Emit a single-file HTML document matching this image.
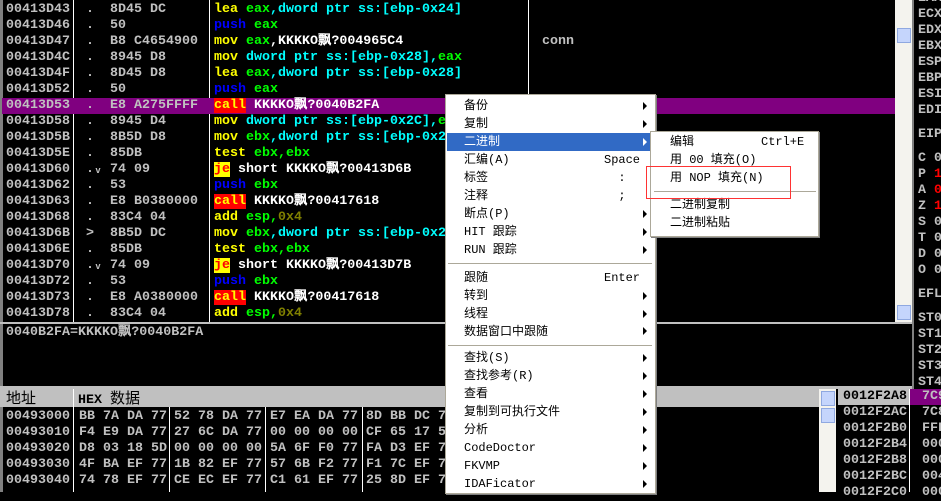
<!DOCTYPE html><html><head><meta charset="utf-8"><style>
*{margin:0;padding:0;box-sizing:border-box}
body{width:941px;height:492px;overflow:hidden;background:#000;position:relative;font-family:"Liberation Mono",monospace;font-weight:bold;font-size:13.33px;color:#c0c0c0}
.a{position:absolute;white-space:pre;line-height:16px}
.y{color:#ff0}.g{color:#0f0}.c{color:#0ff}.b{color:#00f}.o{color:#808000}.w{color:#fff}
.cl{background:#f00;color:#ff0}.je{background:#ff0;color:#f00}
.m{position:absolute;font-family:"Liberation Mono","Noto Sans CJK SC",monospace;font-weight:normal;font-size:12px;color:#000;line-height:18px;white-space:pre}
.arr{position:absolute;width:0;height:0;border-top:4px solid transparent;border-bottom:4px solid transparent;border-left:4px solid #000}
.sep{position:absolute;height:1px;background:#aca899}
</style></head><body>
<div style="position:absolute;left:0;top:0;width:3px;height:492px;background:#808080"></div>
<div style="position:absolute;left:73px;top:0;width:1px;height:322px;background:#fff"></div>
<div style="position:absolute;left:209px;top:0;width:1px;height:322px;background:#fff"></div>
<div style="position:absolute;left:528px;top:0;width:1px;height:322px;background:#fff"></div>
<div style="position:absolute;left:2px;top:98px;width:893px;height:16px;background:#800080"></div>
<div class="a" style="left:6px;top:2px">00413D43
00413D46
00413D47
00413D4C
00413D4F
00413D52
00413D53
00413D58
00413D5B
00413D5E
00413D60
00413D62
00413D63
00413D68
00413D6B
00413D6E
00413D70
00413D72
00413D73
00413D78</div>
<div class="a" style="left:86px;top:2px">.  8D45 DC
.  50
.  B8 C4654900
.  8945 D8
.  8D45 D8
.  50
.  E8 A275FFFF
.  8945 D4
.  8B5D D8
.  85DB
.ᵥ 74 09
.  53
.  E8 B0380000
.  83C4 04
&gt;  8B5D DC
.  85DB
.ᵥ 74 09
.  53
.  E8 A0380000
.  83C4 04</div>
<div class="a" style="left:214px;top:2px"><span class="y">lea</span> <span class="g">eax</span><span class="c">,dword ptr ss:[ebp-0x24]</span>
<span class="b">push</span> <span class="g">eax</span>
<span class="y">mov</span> <span class="g">eax</span><span class="w">,KKKKO飘?004965C4</span>
<span class="y">mov</span> <span class="c">dword ptr ss:[ebp-0x28],</span><span class="g">eax</span>
<span class="y">lea</span> <span class="g">eax</span><span class="c">,dword ptr ss:[ebp-0x28]</span>
<span class="b">push</span> <span class="g">eax</span>
<span class="cl">call</span> <span class="w">KKKKO飘?0040B2FA</span>
<span class="y">mov</span> <span class="c">dword ptr ss:[ebp-0x2C],</span><span class="g">eax</span>
<span class="y">mov</span> <span class="g">ebx</span><span class="c">,dword ptr ss:[ebp-0x28]</span>
<span class="y">test</span> <span class="g">ebx,ebx</span>
<span class="je">je</span><span class="w"> short KKKKO飘?00413D6B</span>
<span class="b">push</span> <span class="g">ebx</span>
<span class="cl">call</span> <span class="w">KKKKO飘?00417618</span>
<span class="y">add</span> <span class="g">esp</span><span class="g">,</span><span class="o">0x4</span>
<span class="y">mov</span> <span class="g">ebx</span><span class="c">,dword ptr ss:[ebp-0x24]</span>
<span class="y">test</span> <span class="g">ebx,ebx</span>
<span class="je">je</span><span class="w"> short KKKKO飘?00413D7B</span>
<span class="b">push</span> <span class="g">ebx</span>
<span class="cl">call</span> <span class="w">KKKKO飘?00417618</span>
<span class="y">add</span> <span class="g">esp</span><span class="g">,</span><span class="o">0x4</span></div>
<div class="a" style="left:542px;top:34px">conn</div>
<div style="position:absolute;left:895px;top:0;width:17px;height:322px;background:#f4f3ee"></div>
<div style="position:absolute;left:897px;top:28px;width:14px;height:15px;background:#c5d5fc;border:1px solid #8fa8e0"></div>
<div style="position:absolute;left:897px;top:305px;width:14px;height:15px;background:#c5d5fc;border:1px solid #8fa8e0"></div>
<div style="position:absolute;left:912px;top:0;width:2px;height:390px;background:#808080"></div>
<div class="a" style="left:918px;top:-9px">EAX
ECX
EDX
EBX
ESP
EBP
ESI
EDI
</div>
<div class="a" style="left:918px;top:127px">EIP</div>
<div class="a" style="left:918px;top:151px">C <span>0</span>
P <span style="color:#f00">1</span>
A <span style="color:#f00">0</span>
Z <span style="color:#f00">1</span>
S 0
T 0
D 0
O 0</div>
<div class="a" style="left:918px;top:287px">EFL</div>
<div class="a" style="left:918px;top:311px">ST0
ST1
ST2
ST3
ST4</div>
<div style="position:absolute;left:0;top:322px;width:912px;height:2px;background:#c0c0c0"></div>
<div class="a" style="left:6px;top:325px">0040B2FA=KKKKO飘?0040B2FA</div>
<div style="position:absolute;left:0;top:386px;width:912px;height:3px;background:#c0c0c0"></div>
<div style="position:absolute;left:0;top:389px;width:819px;height:18px;background:#c0c0c0"></div>
<div style="position:absolute;left:73px;top:389px;width:1px;height:103px;background:#fff"></div>
<div class="a" style="left:6px;top:389px;color:#000;font-weight:normal;font-family:'Noto Sans CJK SC',sans-serif;font-size:15px;line-height:18px">地址</div>
<div class="a" style="left:78px;top:390px;color:#000">HEX <span style="font-family:'Noto Sans CJK SC',sans-serif;font-weight:normal;font-size:15px">数据</span></div>
<div style="position:absolute;left:169px;top:407px;width:1px;height:85px;background:#fff"></div>
<div style="position:absolute;left:265px;top:407px;width:1px;height:85px;background:#fff"></div>
<div style="position:absolute;left:362px;top:407px;width:1px;height:85px;background:#fff"></div>
<div class="a" style="left:6px;top:409px">00493000
00493010
00493020
00493030
00493040</div>
<div class="a" style="left:79px;top:409px">BB 7A DA 77
F4 E9 DA 77
D8 03 18 5D
4F BA EF 77
74 78 EF 77</div>
<div class="a" style="left:174px;top:409px">52 78 DA 77
27 6C DA 77
00 00 00 00
1B 82 EF 77
CE EC EF 77</div>
<div class="a" style="left:270px;top:409px">E7 EA DA 77
00 00 00 00
5A 6F F0 77
57 6B F2 77
C1 61 EF 77</div>
<div class="a" style="left:366px;top:409px">8D BB DC 77
CF 65 17 5D
FA D3 EF 77
F1 7C EF 77
25 8D EF 77</div>
<div style="position:absolute;left:819px;top:389px;width:17px;height:103px;background:#f4f3ee"></div>
<div style="position:absolute;left:821px;top:391px;width:14px;height:15px;background:#c5d5fc;border:1px solid #8fa8e0"></div>
<div style="position:absolute;left:821px;top:408px;width:14px;height:15px;background:#c5d5fc;border:1px solid #8fa8e0"></div>
<div style="position:absolute;left:836px;top:389px;width:73px;height:103px;background:#000"></div>
<div style="position:absolute;left:838px;top:389px;width:71px;height:16px;background:#c0c0c0"></div>
<div style="position:absolute;left:909px;top:389px;width:1px;height:103px;background:#fff"></div>
<div style="position:absolute;left:910px;top:389px;width:31px;height:16px;background:#800080"></div>
<div class="a" style="left:843px;top:389px"><span style="color:#000">0012F2A8</span>
0012F2AC
0012F2B0
0012F2B4
0012F2B8
0012F2BC
0012F2C0</div>
<div class="a" style="left:922px;top:389px">7C9
7C8
FFF
000
000
004
000</div>
<div style="position:absolute;left:445px;top:94px;width:211px;height:400px;background:#fff;border:1px solid #aca899;box-shadow:1px 1px 0 #808080"></div>
<div style="position:absolute;left:447px;top:133px;width:203px;height:18px;background:#316ac5"></div>
<div class="m" style="left:464px;top:97px">备份
复制
<span style="color:#fff">二进制</span>
汇编(A)
标签
注释
断点(P)
HIT 跟踪
RUN 跟踪</div>
<div class="m" style="left:604px;top:151px">Space
  :
  ;</div>
<div class="sep" style="left:448px;top:263px;width:204px"></div>
<div class="m" style="left:464px;top:269px">跟随
转到
线程
数据窗口中跟随</div>
<div class="m" style="left:604px;top:269px">Enter</div>
<div class="sep" style="left:448px;top:345px;width:204px"></div>
<div class="m" style="left:464px;top:349px">查找(S)
查找参考(R)
查看
复制到可执行文件
分析
CodeDoctor
FKVMP
IDAFicator</div>
<div class="arr" style="left:643px;top:102px"></div>
<div class="arr" style="left:643px;top:120px"></div>
<div class="arr" style="left:643px;top:138px;border-left-color:#fff"></div>
<div class="arr" style="left:643px;top:210px"></div>
<div class="arr" style="left:643px;top:228px"></div>
<div class="arr" style="left:643px;top:246px"></div>
<div class="arr" style="left:643px;top:292px"></div>
<div class="arr" style="left:643px;top:310px"></div>
<div class="arr" style="left:643px;top:327px"></div>
<div class="arr" style="left:643px;top:354px"></div>
<div class="arr" style="left:643px;top:372px"></div>
<div class="arr" style="left:643px;top:390px"></div>
<div class="arr" style="left:643px;top:408px"></div>
<div class="arr" style="left:643px;top:426px"></div>
<div class="arr" style="left:643px;top:444px"></div>
<div class="arr" style="left:643px;top:462px"></div>
<div class="arr" style="left:643px;top:480px"></div>
<div style="position:absolute;left:650px;top:131px;width:169px;height:106px;background:#fff;border:1px solid #aca899;box-shadow:1px 1px 0 #808080"></div>
<div class="m" style="left:670px;top:133px">编辑
用 00 填充(O)
用 NOP 填充(N)</div>
<div class="m" style="left:761px;top:133px">Ctrl+E</div>
<div class="sep" style="left:654px;top:191px;width:162px"></div>
<div class="m" style="left:670px;top:196px">二进制复制
二进制粘贴</div>
<div style="position:absolute;left:646px;top:166px;width:145px;height:33px;border:1px solid #f33"></div>
</body></html>
